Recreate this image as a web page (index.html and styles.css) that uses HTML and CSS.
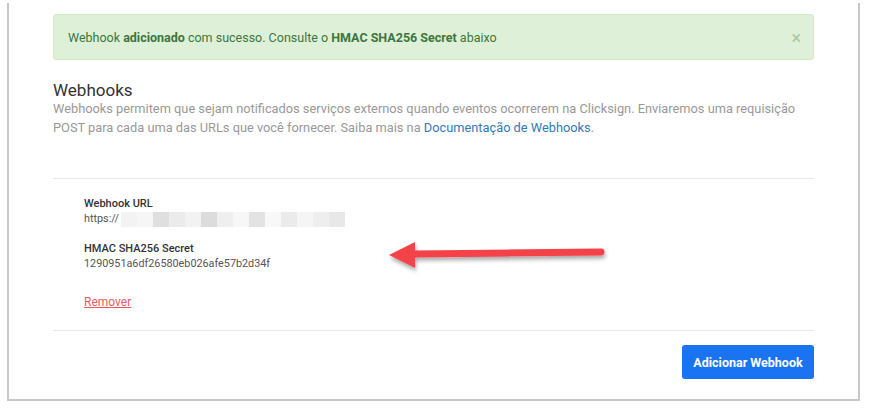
FILE: index.html
```html
<!DOCTYPE html>
<html lang="pt-BR">
<head>
  <meta charset="UTF-8" />
  <title>Webhooks</title>
  <link rel="stylesheet" href="styles.css">
</head>
<body>
  <div class="frame">
    <div class="alert">
      <span>Webhook <b>adicionado</b> com sucesso. Consulte o <b>HMAC SHA256 Secret</b> abaixo</span>
      <span class="close">&times;</span>
    </div>

    <h2 class="title">Webhooks</h2>
    <p class="desc">Webhooks permitem que sejam notificados serviços externos quando eventos ocorrerem na Clicksign. Enviaremos uma requisição POST para cada uma das URLs que você fornecer. Saiba mais na <a href="#">Documentação de Webhooks</a>.</p>

    <div class="hook">
      <div class="label">Webhook URL</div>
      <div class="value url">https://<span class="blur">
        <i style="background:#f3f3f3"></i><i style="background:#f6f6f6"></i><i style="background:#dfdfdf"></i><i style="background:#ebebeb"></i><i style="background:#f2f2f2"></i><i style="background:#dcdcdc"></i><i style="background:#efefef"></i><i style="background:#f7f7f7"></i><i style="background:#e3e3e3"></i><i style="background:#f8f8f8"></i><i style="background:#ebebeb"></i><i style="background:#f5f5f5"></i><i style="background:#eeeeee"></i><i style="background:#e8e8e8"></i>
      </span></div>

      <div class="label">HMAC SHA256 Secret</div>
      <div class="value">1290951a6df26580eb026afe57b2d34f</div>

      <a class="remove" href="#">Remover</a>
    </div>

    <div class="actions">
      <button>Adicionar Webhook</button>
    </div>

    <svg class="arrow" width="230" height="44" viewBox="0 0 230 44">
      <defs>
        <filter id="sh" x="-10%" y="-40%" width="120%" height="200%">
          <feDropShadow dx="1" dy="3" stdDeviation="2" flood-color="#000" flood-opacity="0.35"/>
        </filter>
      </defs>
      <g filter="url(#sh)" fill="#f5434a" stroke="#f5434a">
        <line x1="28" y1="14" x2="216" y2="12" stroke-width="7" stroke-linecap="round"/>
        <polygon points="4,15 30,2 30,28" stroke="none"/>
      </g>
    </svg>
  </div>
</body>
</html>
```

FILE: styles.css
```css
body {
  margin: 0;
  background: #fff;
  font-family: Roboto, "Liberation Sans", Arial, sans-serif;
}
.frame {
  position: relative;
  margin: 3px 33px 0 7px;
  height: 398px;
  box-sizing: border-box;
  border: 2px solid #c8c8c8;
  border-top: none;
  padding: 11px 44px 0 44px;
}
.alert {
  display: flex;
  justify-content: space-between;
  align-items: center;
  height: 46px;
  box-sizing: border-box;
  padding: 0 14px;
  background: #dff0d8;
  border: 1px solid #d6e9c6;
  border-radius: 3px;
  color: #3c763d;
  font-size: 12.5px;
}
.alert b {
  font-weight: 700;
}
.close {
  color: #a9c9a0;
  font-size: 18px;
  margin-right: -2px;
}
.title {
  margin: 19px 0 0;
  font-size: 17px;
  font-weight: 400;
  color: #333;
  line-height: 22px;
}
.desc {
  margin: -2px 0 0;
  font-size: 12.8px;
  line-height: 19px;
  color: #999;
}
.desc a {
  color: #337ab7;
  text-decoration: none;
}
.hook {
  margin-top: 41px;
  border-top: 1px solid #e3e7ec;
  border-bottom: 1px solid #e3e7ec;
  padding: 17px 31px 20px;
}
.label {
  font-size: 11px;
  font-weight: 500;
  color: #333;
  line-height: 15px;
}
.value {
  font-size: 10.8px;
  color: #555;
  line-height: 16px;
  margin-bottom: 14px;
}
.url {
  display: flex;
  align-items: center;
}
.blur {
  display: flex;
  height: 15px;
  margin-left: 2px;
}
.blur i {
  display: block;
  width: 16px;
}
.remove {
  display: inline-block;
  margin-top: 9px;
  font-size: 12px;
  color: #ee5a5f;
}
.actions {
  display: flex;
  justify-content: flex-end;
  padding-top: 14px;
}
button {
  width: 132px;
  height: 34px;
  background: #1a73f0;
  border: none;
  border-radius: 3px;
  color: #fff;
  font-family: inherit;
  font-size: 12.5px;
  font-weight: 700;
  cursor: pointer;
}
.arrow {
  position: absolute;
  left: 376px;
  top: 237px;
}
```
